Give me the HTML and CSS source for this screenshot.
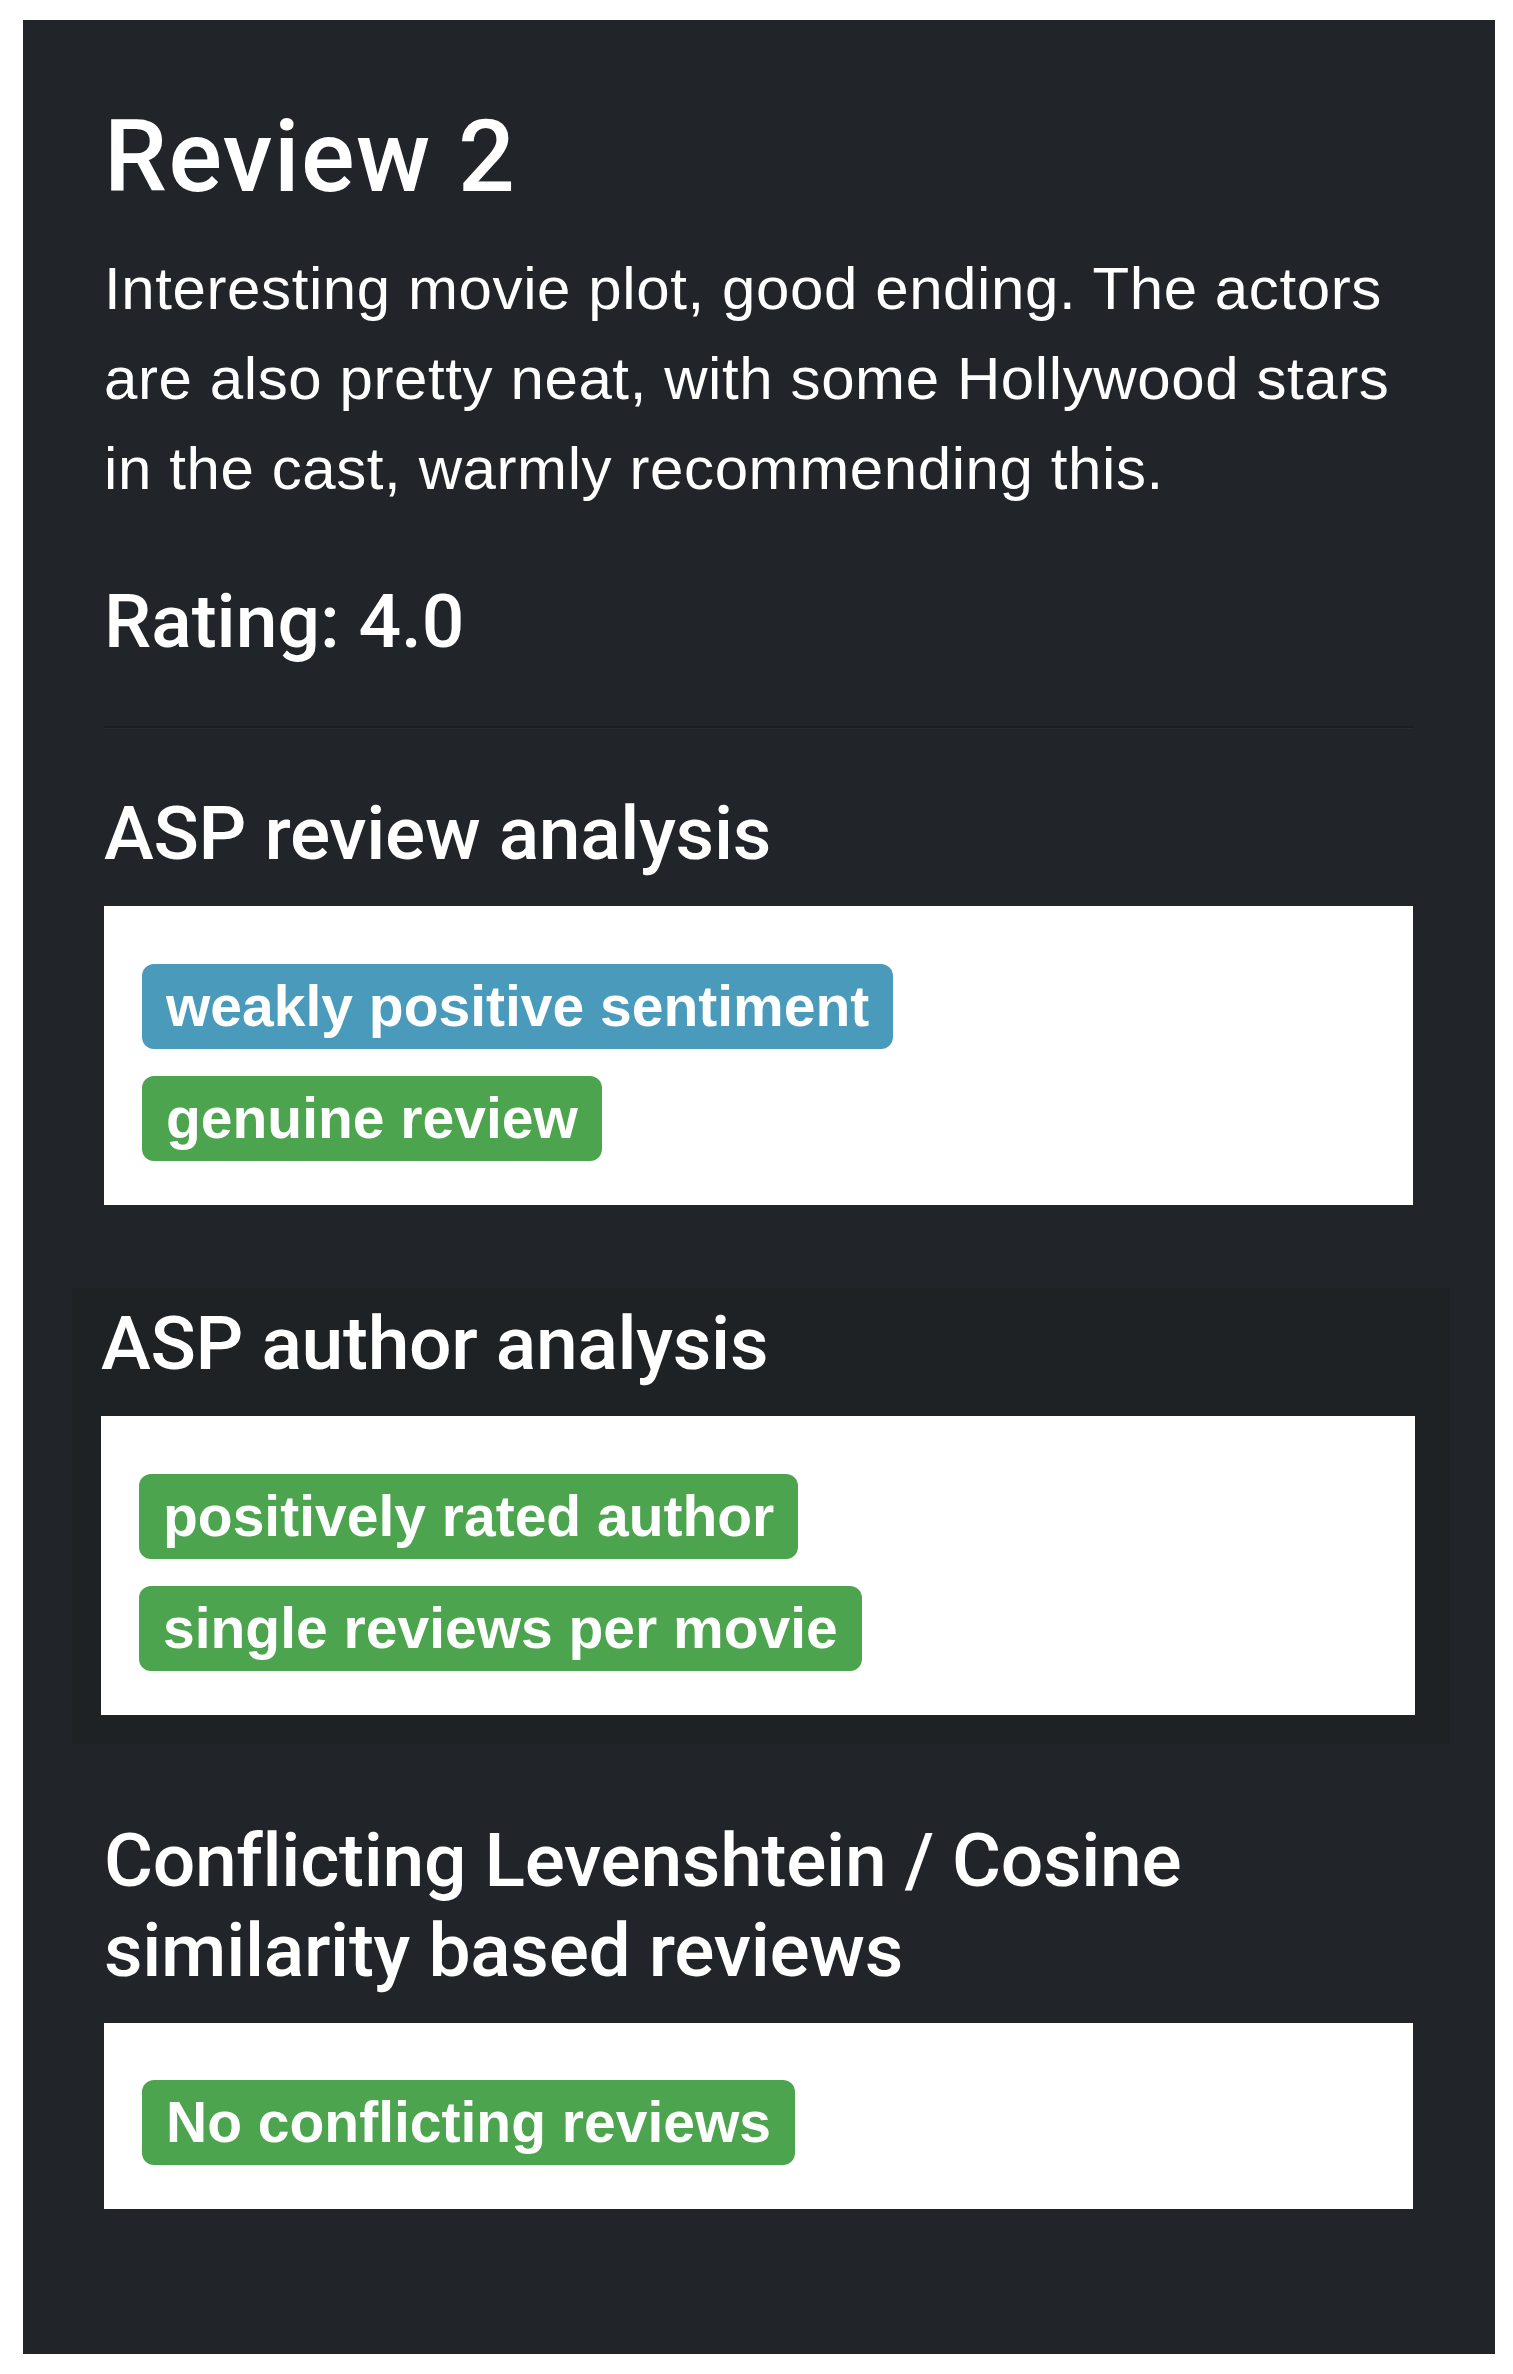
FILE: index.html
```html
<!DOCTYPE html>
<html lang="en">
<head>
<meta charset="utf-8">
<title>Review 2</title>
<link rel="stylesheet" href="styles.css">
</head>
<body>
  <main class="panel">
    <h3 class="title">Review 2</h3>
    <p class="text">Interesting movie plot, good ending. The actors are also pretty neat, with some Hollywood stars in the cast, warmly recommending this.</p>
    <h5 class="rating">Rating: 4.0</h5>
    <hr class="divider">

    <section class="section">
      <h5 class="section-title">ASP review analysis</h5>
      <div class="box">
        <span class="badge badge-info">weakly positive sentiment</span>
        <span class="badge badge-success">genuine review</span>
      </div>
    </section>

    <section class="section section-author">
      <h5 class="section-title">ASP author analysis</h5>
      <div class="box">
        <span class="badge badge-success">positively rated author</span>
        <span class="badge badge-success">single reviews per movie</span>
      </div>
    </section>

    <section class="section section-conflicts">
      <h5 class="section-title">Conflicting Levenshtein / Cosine similarity based reviews</h5>
      <div class="box box-last">
        <span class="badge badge-success">No conflicting reviews</span>
      </div>
    </section>
  </main>
</body>
</html>
```

FILE: styles.css
```css
html, body {
  margin: 0;
  padding: 0;
  background: #ffffff;
}

.panel {
  display: block;
  box-sizing: border-box;
  width: 1472px;
  margin: 20px 0 0 23px;
  padding: 77px 82px 145px 81px;
  background: #212529;
  color: #ffffff;
  font-family: "Liberation Sans", Arial, sans-serif;
}

.title {
  margin: 0 0 27px;
  font-family: Roboto, "Liberation Sans", sans-serif;
  font-weight: 500;
  font-size: 100px;
  line-height: 120px;
  letter-spacing: 1.5px;
}

.text {
  margin: 0 0 62px;
  font-family: "Liberation Sans", Arial, sans-serif;
  font-size: 60px;
  line-height: 90px;
  letter-spacing: 0.6px;
}

.rating {
  margin: 0 0 60px;
  font-family: Roboto, "Liberation Sans", sans-serif;
  font-weight: 500;
  font-size: 75px;
  line-height: 90px;
}

.divider {
  height: 0;
  margin: 0 0 59px;
  border: 0;
  border-top: 2px solid #1b1e21;
  border-bottom: 1px solid #272b2f;
}

.section-title {
  margin: 0 0 28px;
  font-family: Roboto, "Liberation Sans", sans-serif;
  font-weight: 500;
  font-size: 75px;
  line-height: 90px;
  letter-spacing: -0.3px;
}

.section-author {
  margin: 83px -37px 71px -32px;
  padding: 10px 35px 29px 29px;
  background: #1f2225;
}

.box {
  display: flex;
  flex-direction: column;
  align-items: flex-start;
  gap: 27px;
  padding: 58px 38px 44px;
  background: #ffffff;
}

.box-last {
  padding-top: 57px;
}

.badge {
  display: inline-block;
  padding: 14px 24px;
  border-radius: 12px;
  color: #ffffff;
  font-family: "Liberation Sans", Arial, sans-serif;
  font-weight: 700;
  font-size: 57px;
  line-height: 1;
  white-space: nowrap;
}

.badge-info {
  background: #4a9bbb;
}

.badge-success {
  background: #4ca54e;
}
```
